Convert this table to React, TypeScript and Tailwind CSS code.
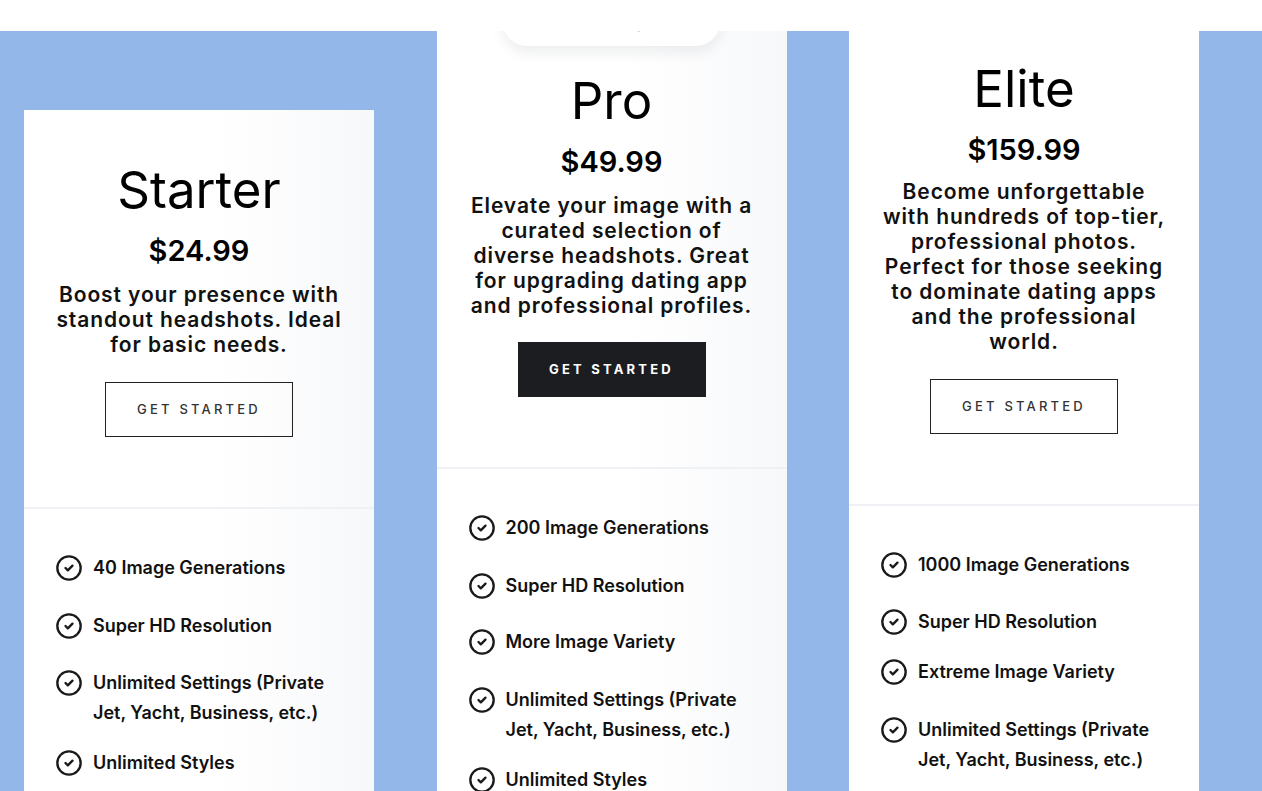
import { CircleCheck } from 'lucide-react'

type Plan = {
  name: string
  price: string
  blurb: string[]
  featured?: boolean
  top: string
  blurbGap: string
  btnGap: string
  fade: boolean
  features: { text: string[]; mt: string }[]
}

const plans: Plan[] = [
  {
    name: 'Starter',
    price: '$24.99',
    blurb: ['Boost your presence with', 'standout headshots. Ideal', 'for basic needs.'],
    top: 'mt-[79px]',
    blurbGap: 'mt-[15px]',
    btnGap: 'mt-[25px]',
    fade: true,
    features: [
      { text: ['40 Image Generations'], mt: 'mt-0' },
      { text: ['Super HD Resolution'], mt: 'mt-[28px]' },
      { text: ['Unlimited Settings (Private', 'Jet, Yacht, Business, etc.)'], mt: 'mt-[27px]' },
      { text: ['Unlimited Styles'], mt: 'mt-[20px]' },
    ],
  },
  {
    name: 'Pro',
    price: '$49.99',
    blurb: [
      'Elevate your image with a',
      'curated selection of',
      'diverse headshots. Great',
      'for upgrading dating app',
      'and professional profiles.',
    ],
    featured: true,
    top: 'mt-[-10px]',
    blurbGap: 'mt-[15px]',
    btnGap: 'mt-[24px]',
    fade: true,
    features: [
      { text: ['200 Image Generations'], mt: 'mt-0' },
      { text: ['Super HD Resolution'], mt: 'mt-[28px]' },
      { text: ['More Image Variety'], mt: 'mt-[26px]' },
      { text: ['Unlimited Settings (Private', 'Jet, Yacht, Business, etc.)'], mt: 'mt-[28px]' },
      { text: ['Unlimited Styles'], mt: 'mt-[20px]' },
    ],
  },
  {
    name: 'Elite',
    price: '$159.99',
    blurb: [
      'Become unforgettable',
      'with hundreds of top-tier,',
      'professional photos.',
      'Perfect for those seeking',
      'to dominate dating apps',
      'and the professional',
      'world.',
    ],
    top: 'mt-[-22px]',
    blurbGap: 'mt-[13px]',
    btnGap: 'mt-[25px]',
    fade: false,
    features: [
      { text: ['1000 Image Generations'], mt: 'mt-0' },
      { text: ['Super HD Resolution'], mt: 'mt-[27px]' },
      { text: ['Extreme Image Variety'], mt: 'mt-[20px]' },
      { text: ['Unlimited Settings (Private', 'Jet, Yacht, Business, etc.)'], mt: 'mt-[28px]' },
    ],
  },
]

const PlanCard = ({ plan }: { plan: Plan }) => {
  return (
    <div
      className={`relative w-[350px] shrink-0 ${plan.top} ${
        plan.fade ? 'bg-gradient-to-r from-white from-55% to-[#f7f8fa]' : 'bg-white'
      }`}
    >
      {plan.featured && (
        <div className="absolute left-[66px] top-[-23px] flex h-[48px] w-[217px] items-center justify-center rounded-[24px] bg-white pt-[1px] pl-[26px] text-[17px] font-semibold text-[#3f4756] shadow-[0_6px_14px_rgba(15,23,42,0.08)]">
          Most Popular
        </div>
      )}

      {/* top half: name, price, blurb, button */}
      <div className="flex flex-col items-center px-4 pt-[50px] pb-[70px] text-center">
        <h2 className="text-[51px] leading-[60px] font-normal text-black">{plan.name}</h2>
        <div className="mt-[15px] text-[29px] leading-[32px] font-semibold text-black">{plan.price}</div>
        <p className={`${plan.blurbGap} whitespace-nowrap text-[21px] leading-[25px] font-semibold tracking-[0.9px] text-[#111]`}>
          {plan.blurb.map((line) => (
            <span key={line} className="block">
              {line}
            </span>
          ))}
        </p>
        <button
          className={`${plan.btnGap} h-[55px] w-[188px] text-[13px] tracking-[3.2px] ${
            plan.featured
              ? 'bg-[#1c1d21] font-bold text-white'
              : 'border border-[#222] font-medium text-[#333]'
          }`}
        >
          GET STARTED
        </button>
      </div>

      <div className="h-[2px] bg-[#eff1f4]" />

      <ul className="px-[31px] pt-[44px] pb-[60px]">
        {plan.features.map((f) => (
          <li key={f.text[0]} className={`flex items-start gap-[10px] ${f.mt}`}>
            <CircleCheck size={28} strokeWidth={2} className="mt-[1px] shrink-0 text-[#1a1a1a]" />
            <span className="whitespace-nowrap text-[18px] leading-[30px] font-semibold text-[#111]">
              {f.text.map((line) => (
                <span key={line} className="block">
                  {line}
                </span>
              ))}
            </span>
          </li>
        ))}
      </ul>
    </div>
  )
}

const App = () => {
  return (
    <div className="h-[791px] overflow-hidden bg-white font-['Inter',sans-serif]">
      {/* white strip over the top of the cards */}
      <div className="relative z-20 h-[31px] bg-white" />
      <div className="flex h-[760px] gap-[62.5px] bg-[#94b7ea] pl-[24px]">
        {plans.map((p) => (
          <PlanCard key={p.name} plan={p} />
        ))}
      </div>
    </div>
  )
}

export default App
